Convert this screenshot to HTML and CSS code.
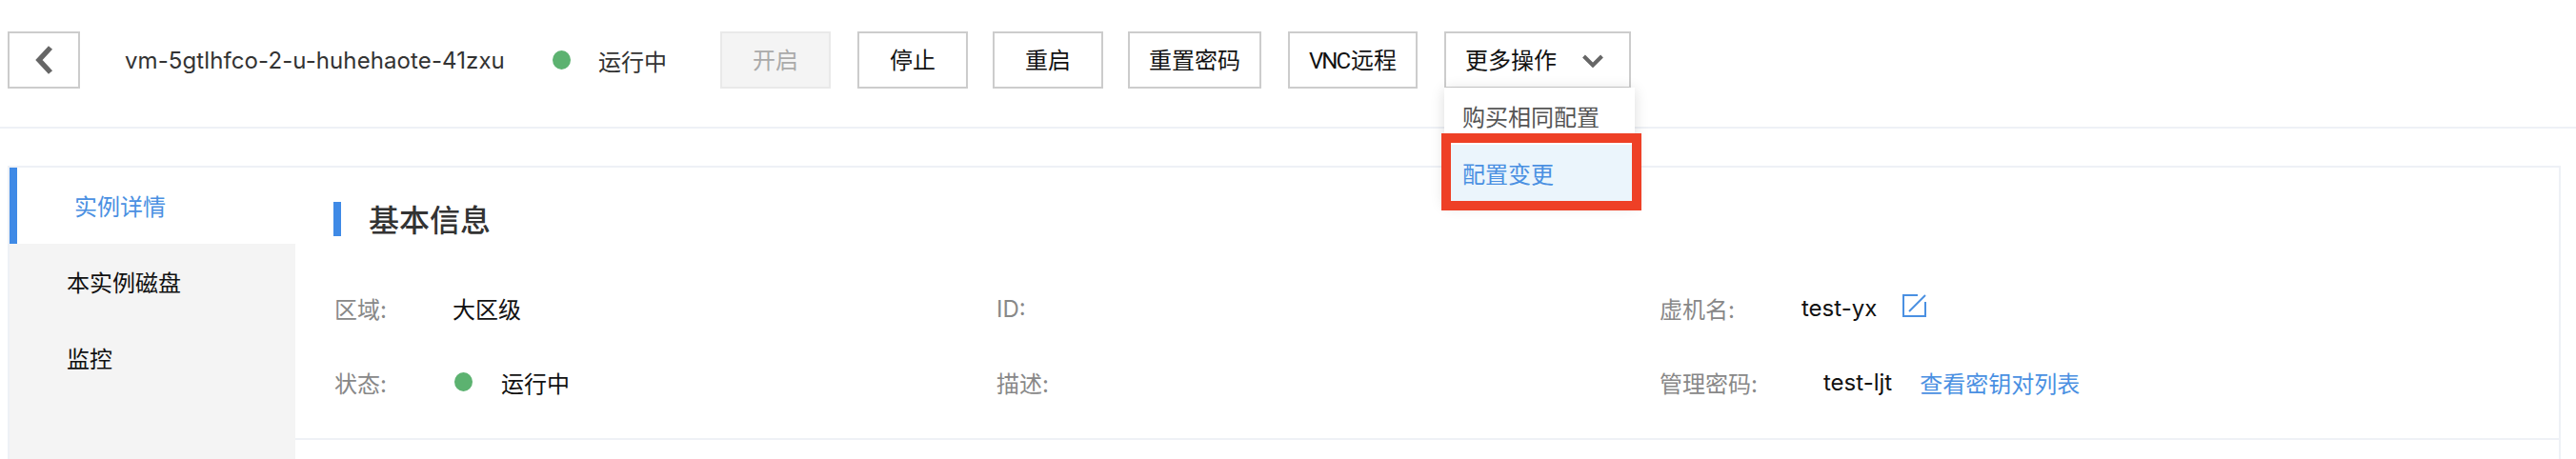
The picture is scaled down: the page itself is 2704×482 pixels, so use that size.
FILE: index.html
```html
<!DOCTYPE html>
<html lang="zh-CN">
<head>
<meta charset="utf-8">
<title>实例详情</title>
<link rel="stylesheet" href="styles.css">
</head>
<body>
<header class="topbar">
  <button class="btn back" aria-label="返回">
    <svg width="20" height="30" viewBox="0 0 20 30"><path d="M17 2 L5 15 L17 28" fill="none" stroke="#666" stroke-width="5.5"/></svg>
  </button>
  <span class="vm-name">vm-5gtlhfco-2-u-huhehaote-41zxu</span>
  <span class="dot head-dot"></span>
  <span class="head-status">运行中</span>
  <button class="btn txt disabled w116">开启</button>
  <button class="btn txt w116 gap-stop">停止</button>
  <button class="btn txt w116 gap-s">重启</button>
  <button class="btn txt w140 gap-s">重置密码</button>
  <button class="btn txt w136 gap-m"><span class="caps">VNC</span>远程</button>
  <div class="more-wrap">
    <button class="btn txt more">更多操作
      <svg width="22" height="14" viewBox="0 0 22 14"><path d="M1.5 2 L11 11.5 L20.5 2" fill="none" stroke="#666" stroke-width="4"/></svg>
    </button>
    <div class="menu">
      <div class="menu-item">购买相同配置</div>
      <div class="menu-item active">配置变更</div>
    </div>
    <div class="highlight"></div>
  </div>
</header>
<main class="card">
  <nav class="side">
    <div class="side-item current">实例详情</div>
    <div class="side-item">本实例磁盘</div>
    <div class="side-item">监控</div>
  </nav>
  <section class="content">
    <h2 class="title">基本信息</h2>
    <div class="info">
      <div class="cell"><span class="label l1">区域:</span><span class="val">大区级</span></div>
      <div class="cell"><span class="label id">ID:</span></div>
      <div class="cell"><span class="label l2">虚机名:</span><span class="val">test-yx</span>
        <svg class="edit" width="25" height="24" viewBox="0 0 25 24"><path d="M16 1 H1 V23 H24 V8" fill="none" stroke="#4a90e2" stroke-width="2"/><path d="M24 1 L7 18" fill="none" stroke="#4a90e2" stroke-width="2"/></svg>
      </div>
      <div class="cell"><span class="label l1">状态:</span><span class="dot body-dot"></span><span class="val">运行中</span></div>
      <div class="cell"><span class="label">描述:</span></div>
      <div class="cell"><span class="label l3">管理密码:</span><span class="val">test-ljt</span><a class="link">查看密钥对列表</a></div>
    </div>
  </section>
</main>
</body>
</html>
```
FILE: styles.css
```css
* { box-sizing: border-box; }
html, body { margin: 0; padding: 0; background: #fff; }
body { width: 2704px; height: 482px; overflow: hidden; font-family: "Inter", "Noto Sans CJK SC", "Liberation Sans", sans-serif; font-size: 24px; color: #111; }
.topbar { display: flex; align-items: center; height: 135px; padding: 34px 0 41px 8px; border-bottom: 2px solid #eef1f6; }
.btn { height: 60px; padding: 0; background: #fff; border: 2px solid #ccc; font: inherit; color: #111; display: flex; align-items: center; justify-content: center; line-height: 1; }
.txt { padding-top: 2px; }
.caps { font-family: "Roboto", sans-serif; letter-spacing: -2px; margin-right: 2px; }
.back { width: 76px; }
.w116 { width: 116px; }
.w140 { width: 140px; }
.w136 { width: 136px; }
.gap-stop { margin-left: 28px; }
.gap-s { margin-left: 26px; }
.gap-m { margin-left: 28px; }
.disabled { background: #f4f4f4; border-color: #e9e9e9; color: #aaa; }
.vm-name { margin-left: 47px; width: 449px; flex: none; color: #333; white-space: nowrap; letter-spacing: .1px; }
.dot { display: inline-block; width: 19px; height: 20px; border-radius: 50%; background: #5cb270; flex: none; }
.head-status { margin-left: 29px; width: 128px; flex: none; color: #333; }
.more-wrap { position: relative; margin-left: 28px; }
.more { width: 196px; justify-content: flex-start; padding-left: 20px; gap: 27px; }
.menu { position: absolute; left: 0; top: 59px; width: 200px; height: 122px; background: #fff; box-shadow: 0 2px 14px rgba(0,0,0,.14); z-index: 2; }
.menu-item { height: 60px; line-height: 63px; padding-left: 19px; color: #555; white-space: nowrap; }
.active { background: #ebf5fc; color: #4a90e2; }
.highlight { position: absolute; left: -3px; top: 107px; width: 210px; height: 81px; border: 10px solid #ee4026; z-index: 3; }
.card { display: flex; margin: 39px 16px 0 8px; height: 308px; border-top: 2px solid #eef1f6; border-right: 2px solid #eef1f6; border-left: 2px solid #eef1f6; }
.side { width: 300px; flex: none; background: #f4f4f4; }
.side-item { height: 80px; line-height: 84px; padding-left: 60px; color: #111; }
.current { background: #fff; color: #4a90e2; border-left: 8px solid #3f8ae6; padding-left: 60px; }
.content { flex: 1; height: 286px; border-bottom: 2px solid #eef1f6; padding: 36px 0 0 40px; }
.title { margin: 0; height: 36px; line-height: 40px; border-left: 8px solid #3f8ae6; padding-left: 29px; font-size: 32px; font-weight: 500; color: #333; }
.info { display: grid; grid-template-columns: 694px 696px 1fr; grid-auto-rows: 78px; margin-top: 36px; }
.cell { display: flex; align-items: center; }
.label { color: #888; white-space: nowrap; padding-left: 2px; }
.id { padding-top: 2px; }
.l1 { width: 125px; padding-left: 1px; }
.l2 { width: 151px; }
.l3 { width: 174px; }
.val { white-space: nowrap; color: #111; }
.body-dot { margin: 0 30px 0 2px; }
.edit { margin-left: 27px; margin-top: -4px; }
.link { margin-left: 29px; color: #4a90e2; white-space: nowrap; }
```
